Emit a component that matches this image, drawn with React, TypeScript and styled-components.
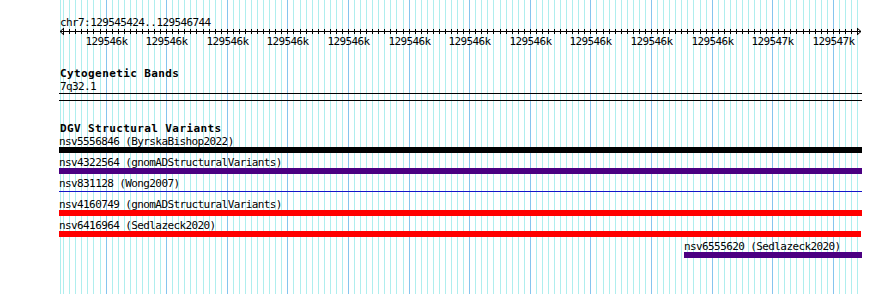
import styled, { createGlobalStyle } from "styled-components";

type Feature = {
  name: string;
  source: string;
  start: number;
  end: number;
  color: string;
  thin?: boolean;
};

const region = { chrom: "chr7", start: 129545424, end: 129546744 };

// track area: 800px for the region, starting at x=60; features may bleed 1-2px
const ORIGIN = 60;
const TRACK_LEFT = 59;
const TRACK_RIGHT = 862;
const PX_PER_BP = 800 / (region.end - region.start);
const MONO = '"DejaVu Sans Mono", "Liberation Mono", monospace';

const toX = (bp: number) => ORIGIN + (bp - region.start) * PX_PER_BP;

const features: Feature[] = [
  { name: "nsv5556846", source: "ByrskaBishop2022", start: 129540000, end: 129550000, color: "#000000" },
  { name: "nsv4322564", source: "gnomADStructuralVariants", start: 129540000, end: 129550000, color: "#4b0082" },
  { name: "nsv831128", source: "Wong2007", start: 129540000, end: 129550000, color: "#1414c8", thin: true },
  { name: "nsv4160749", source: "gnomADStructuralVariants", start: 129540000, end: 129550000, color: "#ff0000" },
  { name: "nsv6416964", source: "Sedlazeck2020", start: 129540000, end: 129546745, color: "#ff0000" },
  { name: "nsv6555620", source: "Sedlazeck2020", start: 129546454, end: 129550000, color: "#4b0082" },
];

const minorTicks: number[] = [];
for (let bp = Math.ceil(region.start / 10) * 10; bp <= region.end; bp += 10) {
  minorTicks.push(bp);
}
const majorTicks = minorTicks.filter((bp) => bp % 100 === 0);

// round half to even, like the browser's own ruler does
const kbLabel = (bp: number) => {
  const k = bp / 1000;
  let r = Math.round(k);
  if (Math.abs(k - Math.floor(k) - 0.5) < 1e-9 && r % 2 !== 0) r -= 1;
  return `${r}k`;
};

const GlobalStyle = createGlobalStyle`
  html, body {
    margin: 0;
    padding: 0;
    background: #ffffff;
  }
  body {
    font-family: ${MONO};
    font-size: 11px;
    letter-spacing: -0.6px;
    color: #000000;
  }
`;

const Browser = styled.div`
  position: relative;
  width: 890px;
  height: 294px;
  overflow: hidden;
  background: #ffffff;
`;

const GridLayer = styled.svg`
  position: absolute;
  top: 0;
  left: 0;
  z-index: 0;
`;

const Tracks = styled.div`
  position: relative;
  z-index: 1;
  display: flex;
  flex-direction: column;
  padding-left: ${TRACK_LEFT}px;
`;

const RegionLabel = styled.div`
  padding: 16px 0 0 1px;
  height: 11px;
  line-height: 13px;
  white-space: nowrap;
`;

const Ruler = styled.svg`
  display: block;
  overflow: visible;
`;

const TrackTitle = styled.div<{ $gap: number }>`
  margin-top: ${(p) => p.$gap}px;
  padding-left: 1px;
  font-size: 11px;
  font-weight: bold;
  letter-spacing: 0.4px;
  line-height: 13px;
  height: 13px;
  white-space: nowrap;
`;

const BandName = styled.div`
  padding-left: 1px;
  line-height: 13px;
  height: 13px;
`;

const BandBox = styled.div`
  box-sizing: border-box;
  width: ${TRACK_RIGHT - TRACK_LEFT}px;
  height: 8px;
  border-top: 1px solid #000000;
  border-bottom: 1px solid #000000;
`;

const FeatureList = styled.div`
  margin-top: 1px;
  display: flex;
  flex-direction: column;
  gap: 4px;
`;

const FeatureRow = styled.div`
  display: flex;
  flex-direction: column;
`;

const FeatureLabel = styled.div`
  height: 11px;
  line-height: 11px;
  white-space: nowrap;
`;

const FeatureGlyph = styled.div<{ $color: string; $thin?: boolean }>`
  height: ${(p) => (p.$thin ? "1px" : "6px")};
  margin: ${(p) => (p.$thin ? "2px 0 3px" : "0")};
  background: ${(p) => p.$color};
`;

function Grid() {
  return (
    <GridLayer width={890} height={294} shapeRendering="crispEdges">
      <rect x={ORIGIN} y={0} width={1} height={294} fill="#afeeee" />
      {minorTicks.map((bp) => (
        <rect
          key={bp}
          x={Math.floor(toX(bp))}
          y={0}
          width={1}
          height={294}
          fill={bp % 100 === 0 ? "#86c4ee" : "#afeeee"}
        />
      ))}
    </GridLayer>
  );
}

function RulerAxis() {
  const w = TRACK_RIGHT - TRACK_LEFT;
  const left = ORIGIN - TRACK_LEFT;
  const right = TRACK_RIGHT - 1 - TRACK_LEFT;
  return (
    <Ruler width={w} height={20}>
      <g shapeRendering="crispEdges" fill="#000000">
        <rect x={left} y={4} width={right - left} height={1} />
        {minorTicks.map((bp) => (
          <rect key={bp} x={Math.floor(toX(bp)) - TRACK_LEFT} y={2} width={1} height={5} />
        ))}
      </g>
      <polyline
        points={`${left + 4},1 ${left},4.5 ${left + 4},8`}
        fill="none"
        stroke="#000000"
        strokeWidth={1}
      />
      <polyline
        points={`${right - 4},1 ${right},4.5 ${right - 4},8`}
        fill="none"
        stroke="#000000"
        strokeWidth={1}
      />
      {majorTicks.map((bp) => (
        <text
          key={bp}
          x={Math.floor(toX(bp)) - TRACK_LEFT + 0.5}
          y={18}
          textAnchor="middle"
          fontFamily={MONO}
          fontSize={11}
          letterSpacing={-0.6}
          fill="#000000"
        >
          {kbLabel(bp)}
        </text>
      ))}
    </Ruler>
  );
}

function FeatureTrack({ feature }: { feature: Feature }) {
  const x0 = Math.round(Math.max(toX(feature.start), TRACK_LEFT));
  const x1 = Math.round(Math.min(toX(feature.end), TRACK_RIGHT));
  return (
    <FeatureRow style={{ marginLeft: x0 - TRACK_LEFT, width: x1 - x0 }}>
      <FeatureLabel>
        {feature.name} ({feature.source})
      </FeatureLabel>
      <FeatureGlyph $color={feature.color} $thin={feature.thin} />
    </FeatureRow>
  );
}

export default function App() {
  return (
    <>
      <GlobalStyle />
      <Browser>
        <Grid />
        <Tracks>
          <RegionLabel>
            {region.chrom}:{region.start}..{region.end}
          </RegionLabel>
          <RulerAxis />
          <TrackTitle $gap={20}>Cytogenetic Bands</TrackTitle>
          <BandName>7q32.1</BandName>
          <BandBox />
          <TrackTitle $gap={21}>DGV Structural Variants</TrackTitle>
          <FeatureList>
            {features.map((f) => (
              <FeatureTrack key={f.name} feature={f} />
            ))}
          </FeatureList>
        </Tracks>
      </Browser>
    </>
  );
}
